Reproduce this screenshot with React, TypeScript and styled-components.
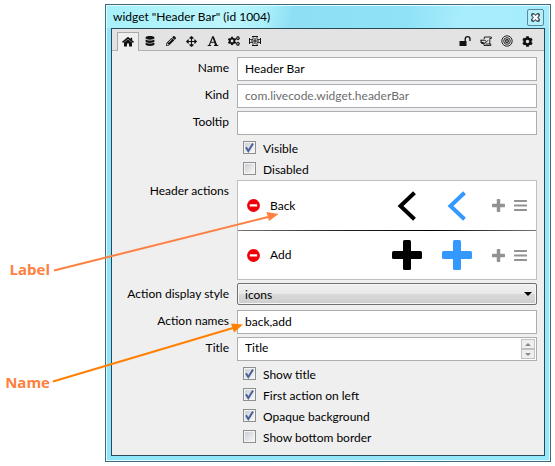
import React from 'react';
import styled, { createGlobalStyle } from 'styled-components';
import { FaDatabase, FaPencilAlt, FaCogs, FaCog, FaArrowsAlt } from 'react-icons/fa';

const GlobalStyle = createGlobalStyle`
  * { box-sizing: border-box; }
  body { margin: 0; background: #fff; color: #000; font: 12px/16px Lato, "Noto Sans", sans-serif; }
  button, input, select { font: inherit; color: inherit; margin: 0; }
  svg { display: block; }
`;

const Page = styled.main`
  position: relative;
  display: grid;
  grid-template-columns: 105px minmax(0, 1fr);
  padding: 4px 4px 4px 0;
`;

const Notes = styled.aside`
  display: flex;
  flex-direction: column;
  align-items: flex-end;
  gap: 93px;
  padding: 255px 55px 0 0;
`;

const Note = styled.strong`
  font: 700 15px/20px "Open Sans", sans-serif;
  color: #ff8040;
`;

const Arrows = styled.svg`
  position: absolute;
  left: 0;
  top: 0;
  pointer-events: none;
`;

const Window = styled.section`
  border: 1px solid #3d6b7b;
  box-shadow: inset 0 0 0 1px #e4fbff;
  background: linear-gradient(90deg, #8fe6fb, #94e5fa 60%, #96e9fd);
  padding: 0 5px 5px;
`;

const TitleBar = styled.header`
  display: flex;
  align-items: center;
  justify-content: space-between;
  height: 23px;
  margin: 0 -4px;
  padding: 0 5px 0 6px;
  border-top: 1px solid #e4fbff;
  background: linear-gradient(100deg, #a6f1fa 0%, #bdf6fc 28%, #aaf0fb 36%, #8edff4 42%, #90e2f7 68%, #a8edfd 80%, #a4ecfd 100%);
`;

const WindowTitle = styled.h1`
  margin: 0;
  font: inherit;
`;

const CloseButton = styled.button`
  display: grid;
  place-items: center;
  width: 17px;
  height: 17px;
  padding: 0;
  border: 1px solid #5c8999;
  border-radius: 2px;
  background: #b4effb;
`;

const Content = styled.div`
  border: 1px solid #2b4856;
  background: #efefef;
  padding-bottom: 7px;
`;

const Toolbar = styled.nav`
  display: flex;
  align-items: flex-end;
  height: 22px;
  padding: 0 6px 0 5px;
  border-bottom: 1px solid #b0b0b0;
  background: #e3e3e3;
`;

const ToolButton = styled.button<{ $active?: boolean }>`
  display: grid;
  place-items: center;
  width: ${p => (p.$active ? 22 : 21)}px;
  height: ${p => (p.$active ? 19 : 18)}px;
  margin-bottom: ${p => (p.$active ? -1 : 0)}px;
  padding: 0;
  border: ${p => (p.$active ? '1px solid #a9a9a9' : '0')};
  border-bottom: 0;
  background: ${p => (p.$active ? '#efefef' : 'transparent')};
  color: #111;
`;

const Spacer = styled.span`
  flex: 1;
`;

const Form = styled.form`
  padding: 6px 7px 0 0;
`;

const Row = styled.div<{ $space?: number }>`
  display: grid;
  grid-template-columns: 117px minmax(0, 1fr);
  column-gap: 8px;
  margin-bottom: ${p => p.$space ?? 3}px;
`;

const Label = styled.label`
  padding-top: 3px;
  text-align: right;
`;

const Field = styled.input`
  width: 100%;
  height: 24px;
  padding: 0 7px 2px;
  border: 1px solid #abadb3;
  border-radius: 0;
  background: #fff;
  outline: 0;
  &:read-only { color: #6d6d6d; }
`;

const SpinField = styled.div`
  display: flex;
  height: 24px;
  padding: 1px;
  border: 1px solid #abadb3;
  background: #fff;
`;

const SpinInput = styled.input`
  flex: 1;
  min-width: 0;
  padding: 0 6px 2px;
  border: 0;
  background: transparent;
  outline: 0;
`;

const Stepper = styled.div`
  display: flex;
  flex-direction: column;
  width: 14px;
`;

const StepButton = styled.button`
  display: grid;
  place-items: center;
  flex: 1;
  padding: 0;
  border: 1px solid #c1c1c1;
  background: #efefef;
  color: #8a8a8a;
`;

const SelectWrap = styled.div`
  display: grid;
  align-items: center;
  > * { grid-area: 1 / 1; }
  > svg { justify-self: end; margin-right: 5px; pointer-events: none; }
`;

const Select = styled.select`
  appearance: none;
  width: 100%;
  height: 22px;
  padding: 1px 20px 0 7px;
  border: 1px solid #707070;
  border-radius: 2px;
  box-shadow: inset 0 0 0 1px #f6f6f6;
  background: linear-gradient(#f0f0f0, #e8e8e8 48%, #dadada 50%, #cdcdcd);
`;

const Checks = styled.div`
  padding: 2px 0 1px 131px;
`;

const CheckLabel = styled.label`
  display: flex;
  align-items: center;
  gap: 7px;
  width: fit-content;
  height: 21px;
`;

const CheckText = styled.span`
  padding-top: 2px;
`;

const CheckBox = styled.input`
  appearance: none;
  flex: none;
  width: 13px;
  height: 13px;
  border: 1px solid #8e8f8f;
  background: linear-gradient(135deg, #ccd0d5, #f6f6f6) content-box, #f4f4f4;
  padding: 1px;
  &:checked {
    background: url("data:image/svg+xml,%3Csvg xmlns='http://www.w3.org/2000/svg' viewBox='0 0 11 11'%3E%3Cpath d='M2 5.2 4.3 9 9 1.5' fill='none' stroke='%234b619c' stroke-width='2'/%3E%3C/svg%3E") border-box center / 11px 11px no-repeat,
      linear-gradient(135deg, #ccd0d5, #f6f6f6) content-box, #f4f4f4;
  }
`;

const ActionList = styled.ul`
  margin: 0;
  padding: 0;
  list-style: none;
  border: 1px solid #c0c0c0;
  background: #fff;
`;

const ActionItem = styled.li`
  display: flex;
  align-items: center;
  height: 49px;
  padding: 0 9px;
  & + & {
    border-top: 1px solid;
    border-image: linear-gradient(90deg, #777, #222 35%, #000 65%, #777) 1;
  }
`;

const ActionName = styled.span`
  flex: 1;
  padding-left: 10px;
`;

const ActionIcons = styled.div`
  display: flex;
  align-items: center;
  gap: 20px;
`;

const ActionTools = styled.div`
  display: flex;
  align-items: center;
  gap: 9px;
  color: #929292;
`;

const IconButton = styled.button`
  display: block;
  padding: 0;
  border: 0;
  background: none;
  color: inherit;
`;

const HomeIcon = () => (
  <svg width="12" height="10" viewBox="0 0 12 10" fill="currentColor">
    <path d="M6 2.2 10 5.5V9.5H7V6.6H5V9.5H2V5.5Z" />
    <path d="M.5 5.3 6 .8l5.5 4.5M9.4.7V3" fill="none" stroke="currentColor" strokeWidth="1.5" />
  </svg>
);

const LetterIcon = () => (
  <svg width="12" height="12" viewBox="0 0 12 12">
    <path d="M2.2 10.5 5.8 1.5M5.8 1.5 9.4 10.5M3.5 7.3h4.5" fill="none" stroke="currentColor" strokeWidth="1.1" />
    <path d="M5.7 1.5h1.1L10.3 10.5H8Z" fill="currentColor" />
    <path d="M.7 10.5h3.4M7 10.5h4.3" stroke="currentColor" strokeWidth="1.1" />
  </svg>
);

const CrossIcon = () => (
  <svg width="12" height="12" viewBox="0 0 12 12" fill="none" stroke="currentColor" strokeWidth="1">
    <path d="M3 1.500h6M3 10.500h6M.5 3v6M11.500 3v6" />
    <path d="M4 2v2.500H1M8 2v2.500h3M4 10V7.500H1M8 10V7.500h3" strokeWidth=".8" />
    <path d="M2 6h8M6 3v6" />
  </svg>
);

const UnlockIcon = () => (
  <svg width="12" height="12" viewBox="0 0 12 12">
    <path d="M.5 6h7v5h-7Z" fill="currentColor" />
    <path d="M6.2 6V4a2.4 2.4 0 0 1 4.8 0v2" fill="none" stroke="currentColor" strokeWidth="1.3" />
  </svg>
);

const ScriptIcon = () => (
  <svg width="12" height="12" viewBox="0 0 12 12" fill="none" stroke="currentColor">
    <path d="M4.3 4V2h7v1.5H9.8V9M4 9v1.5h6.8V9H5.5" strokeWidth=".9" />
    <path d="M.5 5.2h4l1.5 1M1 7l4 1.3 3-3M1 5.2V8l3 .8" strokeWidth="1" />
  </svg>
);

const TargetIcon = () => (
  <svg width="12" height="12" viewBox="0 0 12 12" fill="none" stroke="currentColor">
    <circle cx="6" cy="6" r="5.2" strokeWidth=".9" />
    <circle cx="6" cy="6" r="3.3" strokeWidth=".9" />
    <circle cx="6" cy="6" r="1.4" strokeWidth="1.1" />
  </svg>
);

const RemoveIcon = () => (
  <svg width="13" height="13" viewBox="0 0 13 13">
    <circle cx="6.5" cy="6.5" r="6.4" fill="#ed0008" />
    <rect x="2.8" y="5.3" width="7.4" height="2.3" rx=".4" fill="#fff" />
  </svg>
);

const BackIcon = ({ color }: { color: string }) => (
  <svg width="30" height="30" viewBox="0 0 30 30">
    <path d="M22.5 1.7 8.5 15l14 13.3" fill="none" stroke={color} strokeWidth="4" />
  </svg>
);

const PlusIcon = ({ color, size }: { color: string; size: number }) => (
  <svg width={size} height={size} viewBox="0 0 30 30" fill={color}>
    <rect x="11" width="8" height="30" rx="1.5" />
    <rect y="11" width="30" height="8" rx="1.5" />
  </svg>
);

const BarsIcon = () => (
  <svg width="13" height="13" viewBox="0 0 13 13" fill="currentColor">
    <rect y="1" width="13" height="2" rx=".5" />
    <rect y="5.5" width="13" height="2" rx=".5" />
    <rect y="10" width="13" height="2" rx=".5" />
  </svg>
);

const Triangle = ({ up, width }: { up?: boolean; width: number }) => (
  <svg width={width} height={width / 2} viewBox="0 0 8 4" fill="currentColor">
    <path d={up ? 'M0 4h8L4 0Z' : 'M0 0h8L4 4Z'} />
  </svg>
);

const tools = [
  { name: 'Basic', icon: <HomeIcon />, active: true },
  { name: 'Data', icon: <FaDatabase size={10} /> },
  { name: 'Colors', icon: <FaPencilAlt size={10} /> },
  { name: 'Position', icon: <FaArrowsAlt size={11} /> },
  { name: 'Text', icon: <LetterIcon /> },
  { name: 'Advanced', icon: <FaCogs size={12} /> },
  { name: 'Effects', icon: <CrossIcon /> },
];

const windowTools = [
  { name: 'Lock selection', icon: <UnlockIcon /> },
  { name: 'Edit script', icon: <ScriptIcon /> },
  { name: 'Send message', icon: <TargetIcon /> },
  { name: 'Settings', icon: <FaCog size={11} /> },
];

const actions = [
  { name: 'Back', glyph: (color: string) => <BackIcon color={color} /> },
  { name: 'Add', glyph: (color: string) => <PlusIcon color={color} size={30} /> },
];

const Check = ({ label, checked }: { label: string; checked?: boolean }) => (
  <CheckLabel>
    <CheckBox type="checkbox" defaultChecked={checked} />
    <CheckText>{label}</CheckText>
  </CheckLabel>
);

export default function App() {
  return (
    <Page>
      <GlobalStyle />
      <Notes>
        <Note>Label</Note>
        <Note>Name</Note>
      </Notes>
      <Window>
        <TitleBar>
          <WindowTitle>widget "Header Bar" (id 1004)</WindowTitle>
          <CloseButton aria-label="Close">
            <svg width="9" height="9" viewBox="0 0 9 9">
              <path d="m2 2 5 5M7 2 2 7" stroke="#45535f" strokeWidth="4" strokeLinecap="square" />
              <path d="m2 2 5 5M7 2 2 7" stroke="#fff" strokeWidth="2" />
            </svg>
          </CloseButton>
        </TitleBar>
        <Content>
          <Toolbar>
            {tools.map(t => (
              <ToolButton key={t.name} aria-label={t.name} $active={t.active}>{t.icon}</ToolButton>
            ))}
            <Spacer />
            {windowTools.map(t => (
              <ToolButton key={t.name} aria-label={t.name}>{t.icon}</ToolButton>
            ))}
          </Toolbar>
          <Form onSubmit={e => e.preventDefault()}>
            <Row>
              <Label htmlFor="name">Name</Label>
              <Field id="name" defaultValue="Header Bar" />
            </Row>
            <Row>
              <Label htmlFor="kind">Kind</Label>
              <Field id="kind" readOnly value="com.livecode.widget.headerBar" />
            </Row>
            <Row $space={0}>
              <Label htmlFor="tooltip">Tooltip</Label>
              <Field id="tooltip" />
            </Row>
            <Checks>
              <Check label="Visible" checked />
              <Check label="Disabled" />
            </Checks>
            <Row>
              <Label as="span">Header actions</Label>
              <ActionList>
                {actions.map(a => (
                  <ActionItem key={a.name}>
                    <IconButton type="button" aria-label={`Remove ${a.name}`}><RemoveIcon /></IconButton>
                    <ActionName>{a.name}</ActionName>
                    <ActionIcons>
                      <IconButton type="button" aria-label="Icon">{a.glyph('#000')}</IconButton>
                      <IconButton type="button" aria-label="Highlighted icon">{a.glyph('#3399ff')}</IconButton>
                      <ActionTools>
                        <IconButton type="button" aria-label="Insert action"><PlusIcon color="currentColor" size={13} /></IconButton>
                        <IconButton type="button" aria-label="Reorder"><BarsIcon /></IconButton>
                      </ActionTools>
                    </ActionIcons>
                  </ActionItem>
                ))}
              </ActionList>
            </Row>
            <Row $space={5}>
              <Label htmlFor="style">Action display style</Label>
              <SelectWrap>
                <Select id="style" defaultValue="icons">
                  <option>icons</option>
                  <option>text</option>
                </Select>
                <Triangle width={8} />
              </SelectWrap>
            </Row>
            <Row>
              <Label htmlFor="names">Action names</Label>
              <Field id="names" defaultValue="back,add" />
            </Row>
            <Row $space={0}>
              <Label htmlFor="title">Title</Label>
              <SpinField>
                <SpinInput id="title" defaultValue="Title" />
                <Stepper>
                  <StepButton type="button" aria-label="Scroll up"><Triangle up width={6} /></StepButton>
                  <StepButton type="button" aria-label="Scroll down"><Triangle width={6} /></StepButton>
                </Stepper>
              </SpinField>
            </Row>
            <Checks>
              <Check label="Show title" checked />
              <Check label="First action on left" checked />
              <Check label="Opaque background" checked />
              <Check label="Show bottom border" />
            </Checks>
          </Form>
        </Content>
      </Window>
      <Arrows width="290" height="400" viewBox="0 0 290 400">
        <path d="M54 270.5 268 217" stroke="#ff8040" strokeWidth="2" />
        <path d="m278.500 214-12-2 2.500 9Z" fill="#ff8040" />
        <path d="M53 381.500 233 328" stroke="#ff8000" strokeWidth="2" />
        <path d="m243 324.500-12-1 3 9Z" fill="#ff8000" />
      </Arrows>
    </Page>
  );
}
